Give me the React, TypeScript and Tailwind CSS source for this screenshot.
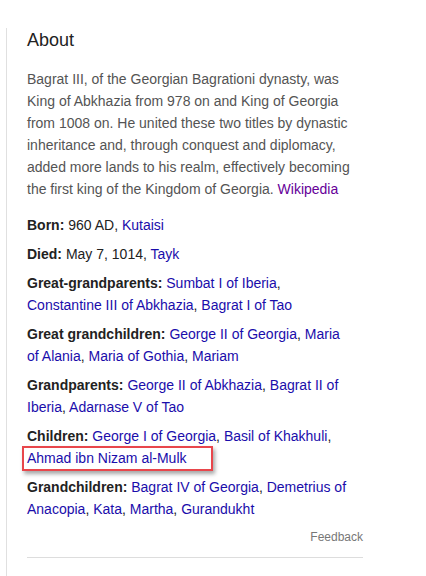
import React from "react";

const A = ({ children }: { children: React.ReactNode }) => (
  <a className="text-[#1a0dab] no-underline cursor-pointer">{children}</a>
);

const Fact = ({
  label,
  children,
  first,
}: {
  label: string;
  children: React.ReactNode;
  first?: boolean;
}) => (
  <div className={first ? "mt-[14px]" : "mt-[7px]"}>
    <span className="font-bold text-[#222]">{label}:</span> {children}
  </div>
);

export default function App() {
  return (
    <div
      className="min-h-[576px] bg-white pl-[6px] pt-[28px]"
      style={{ fontFamily: '"Liberation Sans", Arial, sans-serif' }}
    >
      <div className="min-h-[548px] border-l border-[#e0e0e0] pl-[20px]">
        <div className="w-[336px] text-[14px] leading-[22px] text-[#222]">
          <h2 className="text-[18px] leading-[24px] text-[#222] font-normal">About</h2>
          <p className="mt-[16px] text-[#545454]">
            Bagrat III, of the Georgian Bagrationi dynasty, was King of Abkhazia from 978 on and King
            of Georgia from 1008 on. He united these two titles by dynastic inheritance and, through
            conquest and diplomacy, added more lands to his realm, effectively becoming the first king
            of the Kingdom of Georgia. <a className="text-[#660099]">Wikipedia</a>
          </p>
          <Fact label="Born" first>
            960 AD, <A>Kutaisi</A>
          </Fact>
          <Fact label="Died">
            May 7, 1014, <A>Tayk</A>
          </Fact>
          <Fact label="Great-grandparents">
            <A>Sumbat I of Iberia</A>,
            <br />
            <A>Constantine III of Abkhazia</A>, <A>Bagrat I of Tao</A>
          </Fact>
          <Fact label="Great grandchildren">
            <A>George II of Georgia</A>,{" "}
            <A>
              Maria
              <br />
              of Alania
            </A>
            , <A>Maria of Gothia</A>, <A>Mariam</A>
          </Fact>
          <Fact label="Grandparents">
            <A>George II of Abkhazia</A>, <A>Bagrat II of Iberia</A>, <A>Adarnase V of Tao</A>
          </Fact>
          <div className="relative mt-[7px]">
            <span className="font-bold text-[#222]">Children:</span> <A>George I of Georgia</A>,{" "}
            <A>Basil of Khakhuli</A>, <A>Ahmad ibn Nizam al-Mulk</A>
            <span className="pointer-events-none absolute left-[-5px] top-[21px] h-[25px] w-[191px] border-2 border-[#e8464b] shadow-[2px_3px_4px_rgba(0,0,0,0.35)]" />
          </div>
          <Fact label="Grandchildren">
            <A>Bagrat IV of Georgia</A>, <A>Demetrius of Anacopia</A>, <A>Kata</A>, <A>Martha</A>,{" "}
            <A>Gurandukht</A>
          </Fact>
          <div className="mt-[9px] text-right text-[12px] leading-[16px] text-[#777]">Feedback</div>
          <div className="mt-[12px] border-b border-[#dddddd]" />
        </div>
      </div>
    </div>
  );
}
